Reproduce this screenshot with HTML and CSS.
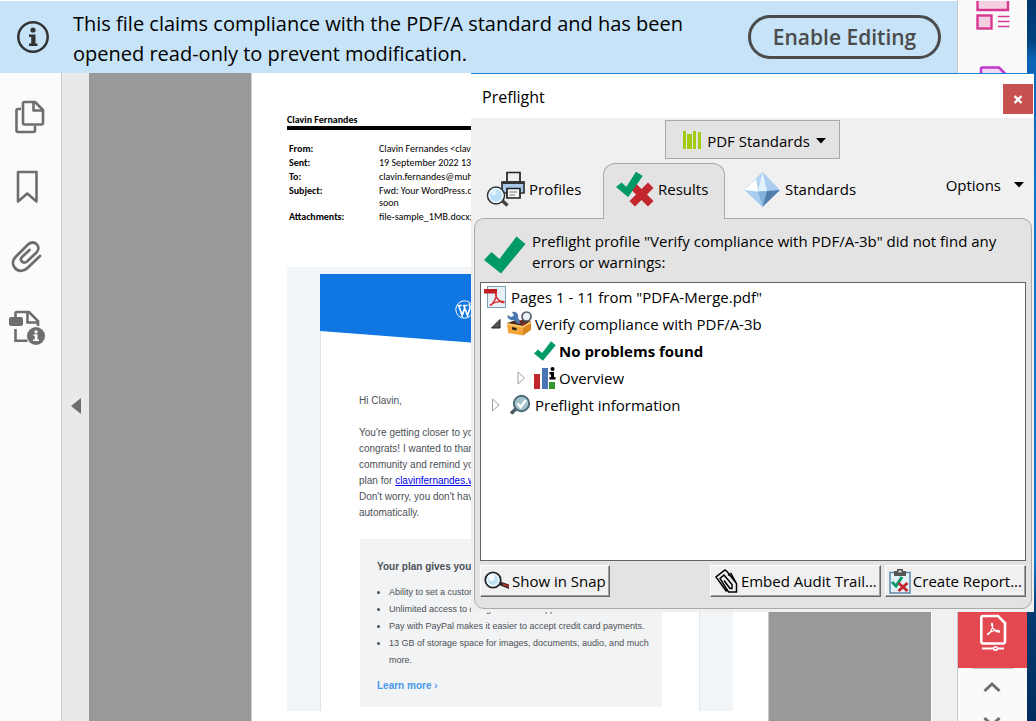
FILE: index.html
```
<!DOCTYPE html>
<html lang="en">
<head>
  <meta charset="utf-8">
  <title>Preflight</title>
  <link rel="stylesheet" href="styles.css">
</head>
<body>
  <div class="app">
    <div class="main">
      <header class="banner">
        <svg class="banner-icon" width="32" height="32" viewBox="0 0 32 32">
          <circle cx="16" cy="16" r="14.7" fill="none" stroke="#333" stroke-width="2.5"/>
          <circle cx="16" cy="9" r="2.6" fill="#333"/>
          <path d="M12 13.500h6.500v9H20.500V25H12v-2.500h2.200V16H12z" fill="#333"/>
        </svg>
        <p>This file claims compliance with the PDF/A standard and has been opened read-only to prevent modification.</p>
        <button class="enable">Enable Editing</button>
      </header>

      <div class="workspace">
        <nav class="side-nav">
          <button aria-label="Page thumbnails">
            <svg width="30" height="34" viewBox="0 0 30 34" fill="none" stroke="#6e6e6e" stroke-width="2.600" stroke-linejoin="round">
              <path d="M6 9H3Q1.500 9 1.500 10.500V30.500Q1.500 32 3 32H18.500Q20 32 20 30.500V26"/>
              <path d="M9.500 2H20L28 10V23Q28 24.500 26.500 24.500H9.500Q8 24.500 8 23V3.500Q8 2 9.500 2Z"/>
              <path d="M18.500 2V10.500H28"/>
            </svg>
          </button>
          <button aria-label="Bookmarks">
            <svg width="30" height="34" viewBox="0 0 30 34" fill="none" stroke="#6e6e6e" stroke-width="2.600" stroke-linejoin="round">
              <path d="M3 2H21.500V31.500L12.300 23.500L3 31.500Z"/>
            </svg>
          </button>
          <button aria-label="Attachments">
            <svg width="34" height="34" viewBox="0 2 34 34" fill="none" stroke="#6e6e6e" stroke-width="2.800" stroke-linecap="round">
              <path d="M30 16L17.500 28C13.500 32 8 31.500 5 28C2 24.500 2.500 20 5.500 17L18 4.500C21 1.700 25 2 27 4.500C29 7 28.500 10.500 26.500 12.500L17 21.500C15.300 23 13 22.800 11.800 21.500C10.600 20 10.800 18 12.200 16.700L19.500 10" transform="translate(0 2)"/>
            </svg>
          </button>
          <button aria-label="Standards">
            <svg width="38" height="37" viewBox="0 0 38 37">
              <path d="M6.500 7V3.500Q6.500 2 8 2H20L29 11V16" fill="none" stroke="#6e6e6e" stroke-width="2.600"/>
              <path d="M18.500 2V12.500H29" fill="none" stroke="#6e6e6e" stroke-width="2.600"/>
              <path d="M6.500 19V30.800H18.500" fill="none" stroke="#6e6e6e" stroke-width="2.600"/>
              <rect y="7" width="14" height="9" rx="2" fill="#6e6e6e"/>
              <circle cx="27" cy="26" r="9" fill="#6e6e6e"/>
              <circle cx="27" cy="21.800" r="1.600" fill="#fff"/>
              <path d="M24.500 24.300h4v5.200h1.500V31h-6v-1.500h1.800v-3.700h-1.300z" fill="#fff"/>
            </svg>
          </button>
        </nav>
        <button class="collapse" aria-label="Collapse">
          <svg width="10" height="16" viewBox="0 0 10 16"><path d="M10 0V16L0 8Z" fill="#6e6e6e"/></svg>
        </button>

        <div class="canvas">
          <article class="page">
            <h2>Clavin Fernandes</h2>
            <dl class="mail-head">
              <dt>From:</dt><dd>Clavin Fernandes &lt;clavin</dd>
              <dt>Sent:</dt><dd>19 September 2022 13:0</dd>
              <dt>To:</dt><dd>clavin.fernandes@muhi</dd>
              <dt>Subject:</dt><dd>Fwd: Your WordPress.com<br>soon</dd>
              <dt>Attachments:</dt><dd>file-sample_1MB.docx;</dd>
            </dl>
            <div class="mail">
              <div class="mail-card">
                <div class="hero">
                  <svg width="19" height="19" viewBox="0 0 19 19">
                    <circle cx="9.500" cy="9.500" r="8.700" fill="none" stroke="#fff" stroke-width="1"/>
                    <path d="M2.500 5.500H7M8 5.500H12.500M3.700 5.500L7.200 15.500L9.500 8.500M8.800 5.500L12.500 15.500L15 8C15.500 6 13.500 5 14.500 3.500" fill="none" stroke="#fff" stroke-width="1.700"/>
                  </svg>
                </div>
                <div class="letter">
                  <p>Hi Clavin,</p>
                  <p>You're getting closer to your<br>congrats! I wanted to thank<br>community and remind you<br>plan for <a href="#">clavinfernandes.wo</a><br>Don't worry, you don't have<br>automatically.</p>
                </div>
                <section class="plan">
                  <h3>Your plan gives you</h3>
                  <ul>
                    <li>Ability to set a custom</li>
                    <li>Unlimited access to design and tech support with live chat or email.</li>
                    <li>Pay with PayPal makes it easier to accept credit card payments.</li>
                    <li>13 GB of storage space for images, documents, audio, and much more.</li>
                  </ul>
                  <a href="#">Learn more ›</a>
                </section>
              </div>
            </div>
          </article>
        </div>
        <div class="track"></div>
      </div>
    </div>

    <aside class="tools">
      <svg width="34" height="29" viewBox="0 0 34 29">
        <path d="M1.500 -2H32V9H1.500Z" fill="#f5d0e3" stroke="#d83790" stroke-width="2.400"/>
        <rect x="1.500" y="14.500" width="14" height="13" fill="#f5d0e3" stroke="#d83790" stroke-width="2.400"/>
        <path d="M22 15.500H33.500M22 20.500H33.500M22 25.500H33.500" stroke="#d83790" stroke-width="1.300"/>
      </svg>
      <svg width="28" height="34" viewBox="0 0 28 34">
        <path d="M2 32V3Q2 1.500 3.500 1.500H20L26 7.500V32Z" fill="#f2d9f5" stroke="#c038cc" stroke-width="2.600"/>
      </svg>
      <div class="tools-end">
        <button class="tool-current" aria-label="PDF Standards">
          <svg width="28" height="38" viewBox="0 0 28 38" fill="none" stroke="#fff">
            <path d="M4 2H19L26 9V27Q26 29.500 24 29.500H4Q2.300 29.500 2.300 27V4Q2.300 2 4 2Z" stroke-width="2.600"/>
            <path d="M8.500 20.500C11 20 14.500 13 13.500 9.800C12.800 8.500 12 10 13 12C14 15 17 18.500 20.500 18C21.500 16.500 17 15.500 13 17.500C10 18.500 8 20 8.500 20.500Z" stroke-width="1.300"/>
            <path d="M3 34.500H14M19 34.500H25" stroke-width="1.800"/>
            <circle cx="16.500" cy="34.500" r="1.800" stroke-width="1.600"/>
          </svg>
        </button>
        <button class="arrow" aria-label="Scroll up">
          <svg width="18" height="12" viewBox="0 0 18 12"><path d="M1.500 10L9 3L16.500 10" fill="none" stroke="#6e6e6e" stroke-width="3"/></svg>
        </button>
        <button class="arrow" aria-label="Scroll down">
          <svg width="18" height="12" viewBox="0 0 18 12"><path d="M1.500 2L9 9L16.500 2" fill="none" stroke="#6e6e6e" stroke-width="3"/></svg>
        </button>
      </div>
    </aside>
    <div class="desktop"></div>
  </div>

  <div class="dialog" role="dialog" aria-labelledby="dialog-title">
    <div class="title-bar">
      <h1 id="dialog-title">Preflight</h1>
      <button class="close" aria-label="Close">
        <svg width="10" height="9" viewBox="0 0 10 9"><path d="M1.500 1L8.500 8M8.500 1L1.500 8" stroke="#fff" stroke-width="2.400"/></svg>
      </button>
    </div>

    <div class="library">
      <button>
        <svg width="18" height="19" viewBox="0 0 18 19" fill="#a2cb13">
          <path d="M0 0h3v18H0zM4 3h5v15H4zM10 0h3v18h-3zM15 1h3v17h-3z"/>
        </svg>
        PDF Standards
        <svg width="10" height="6" viewBox="0 0 10 6"><path d="M0 0H10L5 5.500Z"/></svg>
      </button>
    </div>

    <div class="tabs">
      <button class="tab tab-profiles">
        <svg width="40" height="37" viewBox="0 0 40 37">
          <path d="M21 1.500H34V11H21Z" fill="#eee" stroke="#222" stroke-width="1.700"/>
          <path d="M16 11H38V22H16Z" fill="#a9c7ea" stroke="#333" stroke-width="1.700"/>
          <path d="M15.500 10.500H38.500V13H15.500Z" fill="#333"/>
          <path d="M21 17.500H34V27H21Z" fill="#f5f5f5" stroke="#222" stroke-width="1.700"/>
          <path d="M23.500 21H31M23.500 24H29" stroke="#777" stroke-width="1"/>
          <path d="M15.500 29L21.500 34.500" stroke="#444" stroke-width="3.500"/>
          <circle cx="10" cy="24.500" r="8.500" fill="#b8def8" stroke="#333" stroke-width="1.600"/>
          <circle cx="10" cy="24.500" r="6.800" fill="none" stroke="#eef7fd" stroke-width="1.500"/>
          <circle cx="8" cy="22" r="2.500" fill="#e2f3ff"/>
        </svg>
        Profiles
      </button>
      <button class="tab tab-active">
        <svg width="38" height="36" viewBox="0 0 38 36">
          <path d="M0 16L5.500 11.500L10.500 16L20 1L26.500 5L12 26Z" fill="#009a66"/>
          <path d="M13.500 17L19 11.500L25.500 18L32 11.500L37.500 17L31 23.500L37.500 30L32 35.500L25.500 29L19 35.500L13.500 30L20 23.500Z" fill="#c4262e"/>
          <path d="M10.500 16L20 1L26.500 5L12 26" fill="#009a66"/>
        </svg>
        Results
      </button>
      <button class="tab">
        <svg width="37" height="37" viewBox="0 0 37 37">
          <path d="M18.500 1L0.500 19L18.500 36L36 19Z" fill="#a9cdee"/>
          <path d="M18.500 1L0.500 19L14 20.500Z" fill="#b4d5f3"/>
          <path d="M18.500 1L14 20.500L23 20Z" fill="#e4f2fb"/>
          <path d="M0.500 19L12 8L14 20.500Z" fill="#fff"/>
          <path d="M14 20.500L18.500 36L23 20Z" fill="#81b3df"/>
          <path d="M36 19L23 20L18.500 36Z" fill="#527eae"/>
        </svg>
        Standards
      </button>
      <button class="options">
        Options
        <svg width="10" height="6" viewBox="0 0 10 6"><path d="M0 0H10L5 5.500Z"/></svg>
      </button>
    </div>

    <div class="panel">
      <div class="summary">
        <svg width="42" height="38" viewBox="0 0 42 38"><path d="M0 24L7.500 16L15.500 23L32.500 0.500L41.500 8L17 37.500Z" fill="#009a66"/></svg>
        <p>Preflight profile "Verify compliance with PDF/A-3b" did not find any errors or warnings:</p>
      </div>

      <ul class="tree">
        <li>
          <svg width="24" height="24" viewBox="0 0 24 24">
            <rect x="3.500" y="1.500" width="18" height="21" fill="#e6f0f6" stroke="#7c9fb5"/>
            <path d="M0 4H13V8.500H0Z" fill="#bf1e24"/>
            <path d="M6 20.500C9 19.500 13.500 11 12 8.500C10.500 9 13.500 17 20 17.500C20.500 15.500 11 16.500 7 19.500Z" fill="none" stroke="#dc2b31" stroke-width="1.400"/>
          </svg>
          Pages 1 - 11 from "PDFA-Merge.pdf"
        </li>
        <li class="lvl-1">
          <svg class="twist" width="10" height="10" viewBox="0 0 10 10"><path d="M9 0.500V9H0.500Z" fill="#555" stroke="#222"/></svg>
          <svg width="25" height="25" viewBox="0 0 25 25">
            <path d="M0 12L16 15V24.500L1 22Z" fill="#f4a63c"/>
            <path d="M16 15L24 10V19L16 24.500Z" fill="#d98620"/>
            <path d="M0 12L9 9L24 10L16 15Z" fill="#4a2a1b"/>
            <path d="M0.500 13L16 16L24 11" fill="none" stroke="#ffc868" stroke-width="1.600"/>
            <path d="M5 16l4.500 1v2.500L5 18.500z" fill="#2c2115"/>
            <path d="M5 1C9 0 12 3 11 7L15 12L11 13L7 9C4 10 0 8 0.500 4L4 6L7 4.500Z" fill="#4a78b0"/>
            <path d="M13 10L17 13" stroke="#d22a22" stroke-width="3"/>
            <path d="M17 8.500L14 12.500" stroke="#333" stroke-width="2.500"/>
            <circle cx="19.500" cy="5.500" r="4.500" fill="#eef5fa" stroke="#555c66" stroke-width="1.700"/>
          </svg>
          Verify compliance with PDF/A-3b
        </li>
        <li class="lvl-2">
          <svg width="22" height="20" viewBox="0 0 42 38"><path d="M0 24L7.500 16L15.500 23L32.500 0.500L41.500 8L17 37.500Z" fill="#009a66"/></svg>
          <strong>No problems found</strong>
        </li>
        <li class="lvl-2">
          <svg class="twist" width="8" height="14" viewBox="0 0 8 14"><path d="M0.500 1L7 7L0.500 13Z" fill="#fff" stroke="#a0a0a0"/></svg>
          <svg width="22" height="23" viewBox="0 0 22 23">
            <path d="M0 8h6v15H0z" fill="#c1272d"/><path d="M8 2h6v21H8z" fill="#4a74b4"/><path d="M15 16h6v7h-6z" fill="#36962f"/>
            <circle cx="18.500" cy="3" r="2"/><path d="M15.500 6h4.500v5h1.500v2.500h-6V11h1.500V8.500h-1.500z"/>
          </svg>
          Overview
        </li>
        <li class="lvl-1">
          <svg class="twist" width="8" height="14" viewBox="0 0 8 14"><path d="M0.500 1L7 7L0.500 13Z" fill="#fff" stroke="#a0a0a0"/></svg>
          <svg width="25" height="22" viewBox="0 0 25 22">
            <path d="M10 14L4 19.500" stroke="#4a5a66" stroke-width="3.600"/>
            <circle cx="14.500" cy="9.500" r="7.700" fill="#a3c1ca" stroke="#4c6978" stroke-width="1.900"/>
            <path d="M10.500 9.500L13.500 13L19 6" fill="none" stroke="#fff" stroke-width="2.500"/>
          </svg>
          Preflight information
        </li>
      </ul>

      <div class="actions">
        <button class="snap">
          <svg width="26" height="20" viewBox="0 0 26 20">
            <path d="M15 10L25 13.500V18L15 14Z" fill="#2a2a2a"/>
            <path d="M18.500 12L25 14.500V16.500L19 14Z" fill="#bb3422"/>
            <circle cx="9" cy="9" r="7.700" fill="#bfe3f5" stroke="#222" stroke-width="1.800"/>
            <circle cx="9" cy="9" r="5.800" fill="none" stroke="#e9f6fc" stroke-width="1.500"/>
            <circle cx="7.500" cy="7" r="3" fill="#f5fbff"/>
          </svg>
          Show in Snap
        </button>
        <button>
          <svg width="25" height="26" viewBox="0 0 25 26" fill="none" stroke="#000" stroke-width="1.500">
            <path d="M12.500 23.500L2 9L11 2L13 3.500L22.500 15.500V24H14.500L6 10.500L10 7L18 16.500V20.500H16L10 12.500M14 7.500L17 5.500L22.500 15.500"/>
          </svg>
          Embed Audit Trail...
        </button>
        <button>
          <svg width="22" height="25" viewBox="0 0 22 25">
            <path d="M1 3.500H21V24H1Z" fill="#e5f1fa" stroke="#5d86ad" stroke-width="1.500"/>
            <path d="M5 2H8V0H14V2H17V7H5Z" fill="#555"/><path d="M9.500 1.500h3v2h-3z" fill="#ddd"/>
            <path d="M3 13L7 17L13 8" fill="none" stroke="#009a66" stroke-width="3"/>
            <path d="M9.500 14L18.500 22M18.500 14L9.500 22" stroke="#c4262e" stroke-width="3"/>
          </svg>
          Create Report...
        </button>
      </div>
    </div>
  </div>
</body>
</html>
```
FILE: styles.css
```
* {
  box-sizing: border-box;
}
body {
  margin: 0;
  font-family: "Segoe UI", "Open Sans", "Noto Sans", sans-serif;
  font-size: 15px;
  color: #000;
}
h1, h2, h3, p, ul, dl, dd {
  margin: 0;
  padding: 0;
}
button {
  font: inherit;
  color: inherit;
  background: none;
  border: none;
  padding: 0;
}
svg {
  display: block;
  flex: none;
}

.app {
  display: flex;
  height: 100vh;
  overflow: hidden;
}
.main {
  flex: 1;
  min-width: 0;
  display: flex;
  flex-direction: column;
}

/* read-only notice */
.banner {
  display: flex;
  align-items: center;
  height: 73px;
  padding: 0 16px 0 17px;
  background: #c7e3f8;
  border-top: 1px solid #fff;
}
.banner p {
  flex: 1;
  margin-left: 24px;
  padding: 3px 48px 0 0;
  font-size: 20px;
  line-height: 30px;
}
.enable {
  width: 193px;
  height: 44px;
  border: 3px solid #4b4b4b;
  border-radius: 22px;
  color: #4b4b4b;
  font-size: 21px;
  font-weight: 600;
  white-space: nowrap;
}

.workspace {
  flex: 1;
  min-height: 0;
  display: flex;
}
.side-nav {
  width: 62px;
  padding: 27px 0 0 15px;
  background: #fbfbfb;
  border-right: 1px solid #c8c8c8;
  display: flex;
  flex-direction: column;
  align-items: flex-start;
  gap: 36px;
}
.side-nav button:nth-child(3) {
  margin-left: -5px;
}
.side-nav button:nth-child(4) {
  margin-left: -6px;
}
.collapse {
  width: 27px;
  padding-top: 18px;
  background: #e9e9e9;
  display: flex;
  align-items: center;
  justify-content: center;
}
.canvas {
  flex: 1;
  min-width: 0;
  background: #999;
  padding: 0 162px;
  overflow: hidden;
}
.track {
  width: 26px;
  background: #f0f0f0;
  border-left: 1px solid #fff;
}

/* document page */
.page {
  height: 100%;
  background: #fff;
  border-left: 1px solid #d0d0d0;
  border-right: 1px solid #c8c8c8;
  padding: 40px 35px 10px;
}
.page h2 {
  font-family: Calibri, Lato, sans-serif;
  font-size: 10px;
  line-height: 13px;
  border-bottom: 4px solid #000;
}
.mail-head {
  display: grid;
  grid-template-columns: 90px 1fr;
  row-gap: 2px;
  margin: 13px 0 0 2px;
  font-family: Calibri, Lato, sans-serif;
  font-size: 10px;
  line-height: 12px;
}
.mail-head dt {
  font-weight: 700;
}
.mail-head dd {
  font-weight: 500;
}
.mail {
  margin-top: 44px;
  padding: 7px 33px 0;
  background: #f1f5f8;
}
.mail-card {
  background: #fff;
  border: solid #dbe6ee;
  border-width: 0 1px;
  padding-bottom: 4px;
  font-family: "Liberation Sans", Arial, sans-serif;
  font-size: 10px;
  line-height: 16px;
  color: #4b5057;
}
.hero {
  height: 86px;
  margin: 0 -1px;
  padding: 26px 0 0 135px;
  background: #0f76e2;
  clip-path: polygon(0 0, 100% 0, 100% 100%, 0 57px);
}
.letter {
  padding: 33px 0 18px 38px;
}
.letter p + p {
  margin-top: 16px;
}
.letter a {
  color: #00e;
}
.plan {
  margin: 0 37px 0 39px;
  padding: 20px 3px 13px 17px;
  background: #f2f3f4;
}
.plan ul {
  margin: 9px 0;
  padding-left: 12px;
  font-size: 9px;
  line-height: 17px;
}
.plan h3 {
  font-size: 10px;
}
.plan > a {
  color: #4798ea;
  font-weight: 700;
  text-decoration: none;
}

/* right tool strip */
.tools {
  width: 70px;
  padding-top: 1px;
  background: #fafafa;
  border-left: 1px solid #c8c8c8;
  display: flex;
  flex-direction: column;
  align-items: center;
  gap: 36px;
}
.tools-end {
  width: 100%;
  margin-top: auto;
  height: 117px;
  display: flex;
  flex-direction: column;
  align-items: center;
}
.tool-current {
  width: 100%;
  height: 64px;
  flex: none;
  padding-top: 10px;
  background: #e34850;
  display: flex;
  justify-content: center;
}
.arrow {
  flex: none;
  width: 42px;
  height: 34px;
  border-top: 1px solid #c8c8c8;
  padding: 12px 11px;
}
.arrow + .arrow {
  border: none;
  padding-top: 14px;
}
.desktop {
  width: 9px;
  background: linear-gradient(#00366e 0, #00427f 40px, #0a63b5 60px, #0878d7 200px, #0878d7 560px, #053a70 610px, #002d5c 100%);
}

/* preflight window */
.dialog {
  position: absolute;
  top: 73px;
  right: 2px;
  width: 563px;
  background: #f0f0f0;
  border-top: 1px solid #1883d7;
  padding: 0 2px 3px 3px;
}
.title-bar {
  height: 44px;
  margin: 0 -2px 0 -3px;
  padding: 10px 1px 0 11px;
  background: #fff;
  display: flex;
  justify-content: space-between;
}
.title-bar h1 {
  font-size: 16px;
  font-weight: 400;
  line-height: 26px;
}
.close {
  width: 30px;
  height: 30px;
  background: #c75050;
  display: flex;
  align-items: center;
  justify-content: center;
}
.library {
  display: flex;
  justify-content: center;
  padding: 2px 1px 4px 0;
}
.library button {
  height: 39px;
  padding: 2px 13px 0 17px;
  background: #e3e3e3;
  border: 1px solid #a9a9a9;
  display: flex;
  align-items: center;
  gap: 6px;
}
.tabs {
  display: flex;
  align-items: flex-start;
  padding-left: 12px;
  padding-right: 8px;
}
.tab {
  height: 55px;
  display: flex;
  align-items: center;
  gap: 4px;
  padding-bottom: 3px;
}
.tab-profiles {
  width: 117px;
  gap: 3px;
}
.tab-active {
  height: 56px;
  width: 122px;
  margin: 0 19px -1px 0;
  padding: 0 0 5px 12px;
  background: #e3e3e3;
  border: 1px solid #a9a9a9;
  border-bottom: none;
  border-radius: 12px 12px 0 0;
  z-index: 1;
}
.options {
  height: 44px;
  margin-left: auto;
  display: flex;
  align-items: center;
  gap: 13px;
}
.panel {
  background: #e3e3e3;
  border: 1px solid #a9a9a9;
  border-radius: 10px;
  padding: 12px 5px 11px;
}
.summary {
  display: flex;
  gap: 6px;
  padding-left: 4px;
  line-height: 21px;
  height: 51px;
}
.summary svg {
  margin-top: 5px;
}
.tree {
  height: 279px;
  background: #fff;
  border: 1px solid #646464;
  list-style: none;
  padding: 0 3px;
}
.tree li {
  display: flex;
  align-items: center;
  gap: 3px;
  height: 27px;
}
.tree .lvl-1 {
  padding-left: 4px;
}
.tree .lvl-2 {
  padding-left: 50px;
}
.twist {
  width: 16px;
}
.tree .lvl-2:has(.twist) {
  padding-left: 28px;
  gap: 3px;
}
.tree .lvl-2 .twist {
  width: 19px;
}
.actions {
  display: flex;
  gap: 4px;
  margin-top: 4px;
}
.actions button {
  height: 32px;
  padding: 0 3px;
  background: #f0f0f0;
  border: 1px solid;
  border-color: #fff #696969 #696969 #fff;
  box-shadow: inset -1px -1px #a0a0a0;
  display: flex;
  align-items: center;
  gap: 2px;
  white-space: nowrap;
}
.actions .snap {
  margin-right: auto;
}
```
